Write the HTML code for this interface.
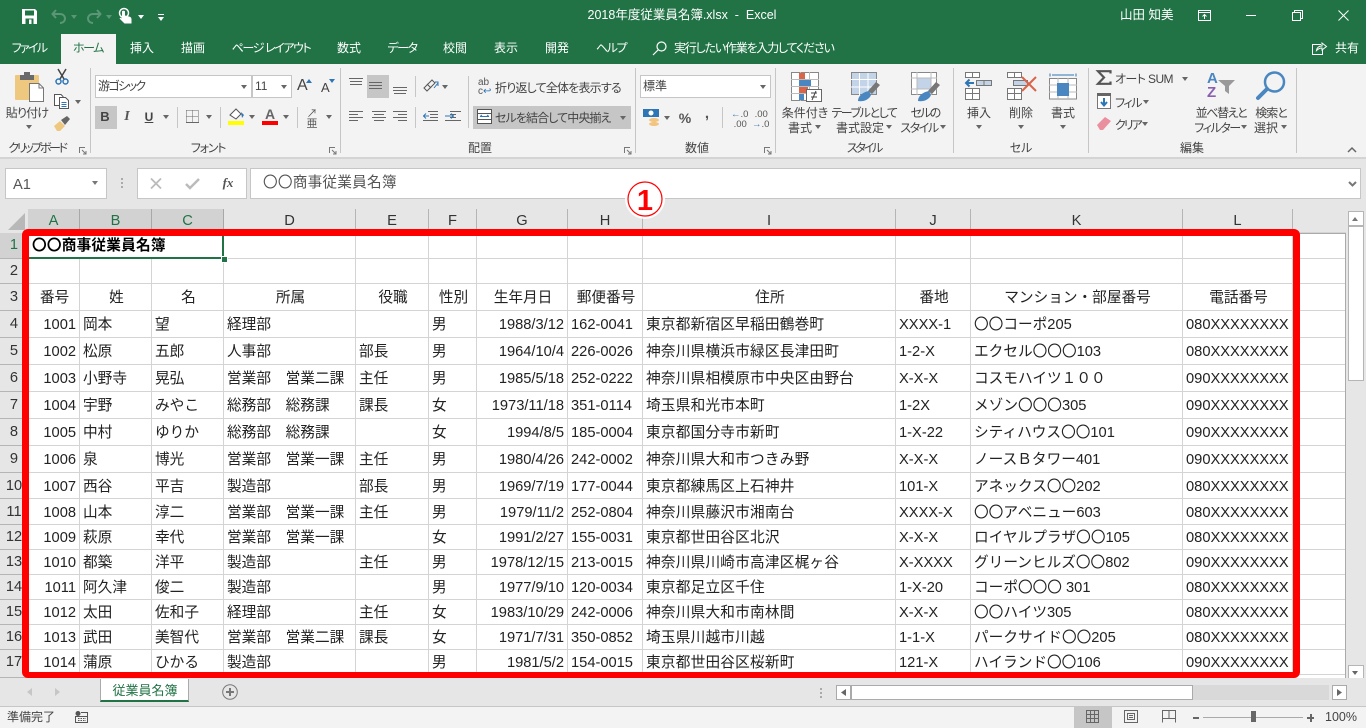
<!DOCTYPE html>
<html lang="ja"><head><meta charset="utf-8"><title>2018年度従業員名簿.xlsx - Excel</title>
<style>
html,body{margin:0;padding:0;width:1366px;height:728px;overflow:hidden;background:#e6e6e6}
body{position:relative;font-family:"Liberation Sans","Noto Sans CJK JP",sans-serif;color:#444}
.t{position:absolute;white-space:nowrap;font-size:12px;line-height:16px;color:#444;font-feature-settings:"palt"}
.c{transform:translateX(-50%);text-align:center}
.w{color:#fff}
.a{position:absolute;width:0;height:0;border:3.5px solid transparent;border-top:4px solid #666;border-bottom:0}
.b{position:absolute}
svg{position:absolute;overflow:visible}
.sep{position:absolute;top:68px;height:85px;width:1px;background:#c6c6c6}
.ss{position:absolute;width:1px;background:#c6c6c6}
.g{position:absolute;white-space:nowrap;font-size:12px;line-height:16px;top:140px;color:#444;transform:translateX(-50%);font-feature-settings:"palt"}
.k{letter-spacing:-1.400px}
.inp{position:absolute;background:#fff;border:1px solid #c6c6c6;box-sizing:border-box}
table{position:absolute;left:27px;top:232px;border-collapse:collapse;table-layout:fixed;width:1318px;font-size:14.67px;color:#111}
td{border:1px solid #d4d4d4;padding:2px 3px 0;white-space:nowrap;overflow:hidden;line-height:16px;color:#222;box-sizing:border-box}
td.r{text-align:right}
td.m{text-align:center;padding:2px 2px 0 4px}
tr td:nth-child(9){letter-spacing:.2px}
.h{position:absolute;top:209px;height:24px;background:#e6e6e6;border-right:1px solid #b5b5b5;box-sizing:border-box;text-align:center;font-size:14.67px;line-height:24px;color:#333}
.h.s{background:#d2d2d2;color:#217346;border-right-color:#a8a8a8}
.rh{position:absolute;left:0;width:28px;background:#e6e6e6;border-bottom:1px solid #b5b5b5;box-sizing:border-box;text-align:center;font-size:14.67px;color:#333;padding-left:0}
</style></head><body>
<!-- title bar -->
<div class="b" style="left:0;top:0;width:1366px;height:64px;background:#217346"></div>
<svg style="left:22px;top:9px" width="15" height="15" viewBox="0 0 15 15"><path d="M0 0H13L15 2V15H0Z" fill="#fff"/><rect x="3" y="1.500" width="9" height="5" fill="#217346"/><rect x="3.500" y="9.500" width="8" height="5.500" fill="#217346"/><rect x="7" y="10.500" width="2.500" height="4.500" fill="#fff"/></svg>
<svg style="left:51px;top:9px" width="16" height="15" viewBox="0 0 16 15" fill="none" stroke="#5b9675" stroke-width="2"><path d="M5 1 1.500 5 5 9M2 5H9C12 5 14 7 14 9.500S12 14 9 14"/></svg>
<div class="a" style="left:71px;top:15px;border-top-color:#5b9675"></div>
<svg style="left:86px;top:9px" width="16" height="15" viewBox="0 0 16 15" fill="none" stroke="#5b9675" stroke-width="2"><path d="M11 1 14.500 5 11 9M14 5H7C4 5 2 7 2 9.500S4 14 7 14"/></svg>
<div class="a" style="left:106px;top:15px;border-top-color:#5b9675"></div>
<svg style="left:118px;top:8px" width="17" height="17" viewBox="0 0 17 17"><circle cx="6" cy="5" r="4.500" fill="none" stroke="#fff" stroke-width="1.500"/><path d="M4 3.500C4 2.500 7 2.500 7 3.500V7.500L11 8.500C13 9 13.500 10 13.500 11.500V15.500H6.500L1.500 10.500 3 9.500 4 10.500Z" fill="#fff"/></svg>
<div class="a" style="left:138px;top:15px;border-top-color:#fff"></div>
<div class="b" style="left:158px;top:14px;width:6px;height:1px;background:#fff"></div>
<div class="a" style="left:158px;top:17px;border-top-color:#fff"></div>
<div class="t w c" style="left:682px;top:7px;font-size:12.500px;font-feature-settings:normal">2018年度従業員名簿.xlsx&nbsp; - &nbsp;Excel</div>
<div class="t w" style="left:1120px;top:7px;font-size:12.500px;font-feature-settings:normal">山田 知美</div>
<svg style="left:1198px;top:10px" width="14" height="11" viewBox="0 0 14 11" fill="none" stroke="#fff"><path d="M.5.500H12.500V10.500H.500ZM.5 2.500H12.500M6.500 9V4.500M4.500 6.500 6.500 4.500 8.500 6.500"/></svg>
<div class="b" style="left:1246px;top:15px;width:10px;height:1px;background:#fff"></div>
<svg style="left:1292px;top:10px" width="11" height="11" viewBox="0 0 11 11" fill="none" stroke="#fff"><path d="M.5 2.500H8.500V10.500H.500ZM2.500 2.500V.500H10.500V8.500H8.500"/></svg>
<svg style="left:1338px;top:10px" width="11" height="11" viewBox="0 0 11 11" fill="none" stroke="#fff"><path d="M.5.500 10.500 10.500M10.500.500.500 10.500"/></svg>
<!-- tabs -->
<div class="b" style="left:61px;top:34px;width:55px;height:31px;background:#f3f3f3"></div>
<div class="t w c k" style="left:29px;top:40px;letter-spacing:-1.700px">ファイル</div>
<div class="t c k" style="left:88px;top:40px;color:#217346">ホーム</div>
<div class="t w c" style="left:142px;top:40px">挿入</div>
<div class="t w c" style="left:193px;top:40px">描画</div>
<div class="t w c k" style="left:271px;top:40px">ページ レイアウト</div>
<div class="t w c" style="left:349px;top:40px">数式</div>
<div class="t w c k" style="left:402px;top:40px">データ</div>
<div class="t w c" style="left:455px;top:40px">校閲</div>
<div class="t w c" style="left:506px;top:40px">表示</div>
<div class="t w c" style="left:557px;top:40px">開発</div>
<div class="t w c k" style="left:611px;top:40px">ヘルプ</div>
<svg style="left:652px;top:41px" width="15" height="15" viewBox="0 0 15 15" fill="none" stroke="#fff" stroke-width="1.200"><circle cx="9.500" cy="5.500" r="4.500"/><path d="M6 9 1 14"/></svg>
<div class="t w" style="left:674px;top:40px;letter-spacing:-1.200px">実行したい作業を入力してください</div>
<svg style="left:1312px;top:41px" width="15" height="14" viewBox="0 0 15 14" fill="none" stroke="#fff"><path d="M9 3.500H.5V13.500H10.500V9M4.500 9.500C5 6.500 7 5 10 5V2L14.500 5.500 10 9V7C8 7 6 8 4.500 9.500Z"/></svg>
<div class="t w" style="left:1335px;top:40px">共有</div>
<!-- ribbon -->
<div class="b" style="left:0;top:64px;width:1366px;height:93px;background:#f3f3f3"></div>
<div class="b" style="left:0;top:157px;width:1366px;height:2px;background:#d4d4d4"></div>
<div class="sep" style="left:90px"></div><div class="sep" style="left:340px"></div><div class="sep" style="left:635px"></div><div class="sep" style="left:775px"></div><div class="sep" style="left:953px"></div><div class="sep" style="left:1088px"></div><div class="sep" style="left:1296px"></div>
<!-- clipboard -->
<svg style="left:15px;top:72px" width="30" height="30" viewBox="0 0 30 30"><rect x="0" y="3" width="24" height="25" rx="1" fill="#edc87e"/><rect x="5" y="3" width="14" height="5" fill="#6a6a6a"/><rect x="9" y="0" width="6" height="4" fill="#6a6a6a"/><path d="M14.500 11.500H24L28.500 16V29.500H14.500Z" fill="#fff" stroke="#777"/><path d="M24 11.500V16H28.500" fill="none" stroke="#777"/></svg>
<svg style="left:55px;top:69px" width="14" height="16" viewBox="0 0 14 16" fill="none" stroke="#444" stroke-width="1.500"><path d="M3 0 9 10M11 0 5 10" /><circle cx="3.500" cy="12.500" r="2.500" stroke="#2e75b6"/><circle cx="10.500" cy="12.500" r="2.500" stroke="#2e75b6"/></svg>
<svg style="left:54px;top:94px" width="15" height="15" viewBox="0 0 15 15" fill="#fff" stroke="#555"><path d="M.5.500H7L9 2.500V11.500H.5Z"/><path d="M5.500 3.500H11.500L14.500 6.500V14.500H5.500Z"/><path d="M7.500 8.500H12.500M7.500 10.500H12.500M7.500 12.500H12.500" stroke="#2e75b6"/></svg>
<div class="a" style="left:75px;top:100px"></div>
<svg style="left:54px;top:116px" width="16" height="15" viewBox="0 0 16 15"><path d="M0 10 6 5 11 10 6 15H3Z" fill="#edc87e"/><path d="M7 4 13 0 16 3 11 9Z" fill="#666"/></svg>
<div class="t c" style="left:27px;top:105px;letter-spacing:-.8px">貼り付け</div>
<div class="a" style="left:26px;top:125px"></div>
<div class="g" style="left:37px;letter-spacing:-2.400px">クリップボード</div>
<svg style="left:79px;top:147px" width="8" height="8" viewBox="0 0 8 8" fill="none" stroke="#777"><path d="M.5 6V.5H6M3 3 7 7M7 4V7H4"/></svg>
<!-- font -->
<div class="inp" style="left:95px;top:75px;width:157px;height:23px"></div>
<div class="t" style="left:98px;top:78px;letter-spacing:-1.600px">游ゴシック</div><div class="a" style="left:241px;top:85px"></div>
<div class="inp" style="left:252px;top:75px;width:40px;height:23px"></div>
<div class="t" style="left:255px;top:78px">11</div><div class="a" style="left:281px;top:85px"></div>
<div class="t" style="left:297px;top:78px;font-size:16px">A</div><div class="a" style="left:306px;top:79px;border-top:0;border-bottom:4px solid #2e75b6"></div>
<div class="t" style="left:321px;top:80px;font-size:13px">A</div><div class="a" style="left:329px;top:79px;border-top-color:#2e75b6"></div>
<div class="b" style="left:95px;top:106px;width:22px;height:23px;background:#c6c6c6"></div>
<div class="t c" style="left:105px;top:109px;font-weight:bold;font-size:13px">B</div>
<div class="t c" style="left:127px;top:109px;font-family:'Liberation Serif',serif;font-style:italic;font-size:14px;font-weight:bold;color:#555">I</div>
<div class="t c" style="left:149px;top:109px;font-weight:bold;font-size:12px;text-decoration:underline">U</div>
<div class="a" style="left:163px;top:115px"></div>
<div class="ss" style="left:177px;top:107px;height:21px"></div>
<svg style="left:186px;top:110px" width="13" height="13" viewBox="0 0 13 13" fill="none" stroke="#666" stroke-dasharray="1 1"><path d="M.5.500H12.500M.5 6.500H12.500M.5.500V12.500M6.500.500V12.500M12.500.500V12.500"/><path d="M0 12.500H13" stroke-dasharray="none"/></svg>
<div class="a" style="left:206px;top:115px"></div>
<div class="ss" style="left:220px;top:107px;height:21px"></div>
<svg style="left:229px;top:108px" width="16" height="13" viewBox="0 0 16 13"><path d="M1 7 7 1 12 6 7 11Z" fill="#fff" stroke="#555"/><path d="M12 4 15 7 13 10Z" fill="#2e75b6"/></svg>
<div class="b" style="left:228px;top:121px;width:16px;height:4px;background:#ffff00"></div>
<div class="a" style="left:249px;top:115px"></div>
<div class="t c" style="left:270px;top:106px;font-size:14px;font-weight:bold;color:#666">A</div>
<div class="b" style="left:262px;top:121px;width:16px;height:4px;background:#f00"></div>
<div class="a" style="left:283px;top:115px"></div>
<div class="ss" style="left:297px;top:107px;height:21px"></div>
<div class="t c" style="left:312px;top:108px;font-size:11px;line-height:13px;color:#555;width:12px">↗<br><span style="position:relative;top:-3px">亜</span></div>
<div class="a" style="left:326px;top:115px"></div>
<div class="g" style="left:208px;letter-spacing:-1.200px">フォント</div>
<svg style="left:329px;top:147px" width="8" height="8" viewBox="0 0 8 8" fill="none" stroke="#777"><path d="M.5 6V.5H6M3 3 7 7M7 4V7H4"/></svg>
<!-- alignment -->
<div class="b" style="left:367px;top:75px;width:22px;height:23px;background:#c6c6c6"></div>
<svg style="left:349px;top:77px" width="60" height="18" viewBox="0 0 60 18" fill="none" stroke="#666"><path d="M0 1.500H14M1 4.500H13M1 7.500H13M20 5.500H33M20 8.500H33M20 11.500H33M44 10.500H58M44 13.500H58M45 16.500H57"/></svg>
<div class="ss" style="left:415px;top:76px;height:21px"></div>
<svg style="left:423px;top:78px" width="16" height="16" viewBox="0 0 16 16" fill="none" stroke="#555"><path d="M1 10 9 2 12 5 4 13ZM4 6 8 10"/><path d="M11 10 15 5M12 4 15 4 15 8" stroke="#2e75b6"/></svg>
<div class="a" style="left:442px;top:85px"></div>
<svg style="left:349px;top:111px" width="60" height="12" viewBox="0 0 60 12" fill="none" stroke="#666"><path d="M0 .5H14M0 3.500H9M0 6.500H14M0 9.500H9M23 .5H37M25 3.500H35M23 6.500H37M25 9.500H35M44 .5H58M49 3.500H58M44 6.500H58M49 9.500H58"/></svg>
<div class="ss" style="left:415px;top:107px;height:21px"></div>
<svg style="left:423px;top:111px" width="40" height="12" viewBox="0 0 40 12" fill="none" stroke="#666"><path d="M5 .5H15M7 3.500H15M7 6.500H15M0 9.500H15M27 .5H38M27 3.500H33M27 6.500H33M22 9.500H38"/><path d="M0 5H6M3 2.500 .5 5 3 7.500M22 5H30M28 2.500 30.500 5 28 7.500" stroke="#2e75b6"/></svg>
<div class="ss" style="left:468px;top:76px;height:52px"></div>
<div class="t" style="left:478px;top:78px;font-size:10px;line-height:9px;color:#555">ab<br>c<span style="color:#2e75b6">↩</span></div>
<div class="t" style="left:495px;top:80px;letter-spacing:-.8px">折り返して全体を表示する</div>
<div class="b" style="left:473px;top:106px;width:158px;height:23px;background:#c6c6c6"></div>
<svg style="left:477px;top:109px" width="15" height="15" viewBox="0 0 15 15" fill="#fff" stroke="#555"><path d="M.5.500H14.500V14.500H.5ZM.5 4.500H14.500M.5 10.500H14.500"/><path d="M3 7.500H12M3 7.500 5 6M12 7.500 10 6" stroke="#2e75b6" fill="none"/></svg>
<div class="t" style="left:495px;top:110px;letter-spacing:-.9px">セルを結合して中央揃え</div>
<div class="a" style="left:620px;top:116px"></div>
<div class="g" style="left:480px">配置</div>
<svg style="left:624px;top:147px" width="8" height="8" viewBox="0 0 8 8" fill="none" stroke="#777"><path d="M.5 6V.5H6M3 3 7 7M7 4V7H4"/></svg>
<!-- number -->
<div class="inp" style="left:640px;top:75px;width:131px;height:23px"></div>
<div class="t" style="left:643px;top:78px">標準</div><div class="a" style="left:760px;top:85px"></div>
<svg style="left:643px;top:109px" width="17" height="17" viewBox="0 0 17 17"><rect x="0" y="0" width="16" height="8" fill="#2e75b6"/><circle cx="8" cy="4" r="2.500" fill="#fff"/><ellipse cx="11" cy="11" rx="5" ry="2" fill="#f2c47f"/><ellipse cx="11" cy="15" rx="5" ry="2" fill="#f2c47f"/></svg>
<div class="a" style="left:664px;top:116px"></div>
<div class="t c" style="left:685px;top:110px;font-size:14px;font-weight:bold;color:#555">%</div>
<div class="t c" style="left:707px;top:106px;font-size:15px;font-weight:bold;color:#555">,</div>
<div class="ss" style="left:722px;top:107px;height:21px"></div>
<div class="t" style="left:731px;top:110px;font-size:9.500px;line-height:10px;color:#555"><span style="color:#2e75b6">←</span>.0<br>&nbsp;.00</div>
<div class="t" style="left:752px;top:110px;font-size:9.500px;line-height:10px;color:#555">&nbsp;.00<br><span style="color:#2e75b6">→</span>.0</div>
<div class="g" style="left:697px">数値</div>
<svg style="left:764px;top:147px" width="8" height="8" viewBox="0 0 8 8" fill="none" stroke="#777"><path d="M.5 6V.5H6M3 3 7 7M7 4V7H4"/></svg>
<!-- styles -->
<svg style="left:791px;top:72px" width="31" height="31" viewBox="0 0 31 31"><path d="M.5.500H27.500V28.500H.5Z" fill="#fff" stroke="#888"/><path d="M9.500 0V29M18.500 0V29M0 7.500H28M0 14.500H28M0 21.500H28" stroke="#bbb"/><rect x="8" y="1" width="6" height="6" fill="#d9644a"/><rect x="8" y="8" width="12" height="6" fill="#4a86c0"/><rect x="8" y="15" width="9" height="6" fill="#d9644a"/><rect x="8" y="22" width="5" height="6" fill="#4a86c0"/><rect x="15.500" y="17.500" width="15" height="12" fill="#fff" stroke="#666"/><path d="M20 21H26M20 25H26M25 19 21 28" stroke="#444" fill="none"/></svg>
<svg style="left:851px;top:72px" width="30" height="30" viewBox="0 0 30 30"><path d="M.5.500H25.500V22.500H.5Z" fill="#c3d4e8" stroke="#888"/><path d="M8.500 0V23M17 0V23M0 7.500H26M0 15H26" stroke="#fff"/><path d="M0 .5H26" stroke="#888"/><path d="M17 19 25 10 29 13 21 22Z" fill="#777"/><path d="M7 29C7 24 12 20 18 19L20 23C18 28 12 30 7 29Z" fill="#4a86c0"/></svg>
<svg style="left:911px;top:72px" width="30" height="30" viewBox="0 0 30 30"><path d="M.5.500H25.500V22.500H.5Z" fill="#fff" stroke="#888"/><rect x="6" y="6" width="14" height="11" fill="#c3d4e8"/><path d="M6 0V23M20 0V23M0 6H26M0 17H26" stroke="#bbb"/><path d="M17 19 25 10 29 13 21 22Z" fill="#777"/><path d="M7 29C7 24 12 20 18 19L20 23C18 28 12 30 7 29Z" fill="#4a86c0"/></svg>
<div class="t c" style="left:805px;top:105px">条件付き</div><div class="t c" style="left:800px;top:120px">書式</div><div class="a" style="left:815px;top:125px"></div>
<div class="t c k" style="left:864px;top:105px">テーブルとして</div><div class="t c" style="left:860px;top:120px">書式設定</div><div class="a" style="left:886px;top:125px"></div>
<div class="t c" style="left:925px;top:105px;letter-spacing:-1.700px">セルの</div><div class="t c k" style="left:919px;top:120px">スタイル</div><div class="a" style="left:940px;top:125px"></div>
<div class="g" style="left:864px;letter-spacing:-2.200px">スタイル</div>
<!-- cells -->
<svg style="left:965px;top:72px" width="28" height="28" viewBox="0 0 28 28" fill="#fff" stroke="#777"><path d="M.5.500H14.500V5.500H.5ZM7.500.500V5.500M.5 16.500H14.500V27.500H.5ZM7.500 16.500V27.500M.5 21.500H14.500"/><path d="M11.500 8.500H26.500V13.500H11.500Z" fill="#c3d4e8"/><path d="M19 8.500V13.500"/><path d="M1 11H9M4.500 7.500 1 11 4.500 14.500" fill="none" stroke="#2e75b6" stroke-width="2"/></svg>
<svg style="left:1007px;top:72px" width="30" height="28" viewBox="0 0 30 28" fill="#fff" stroke="#777"><path d="M.5.500H14.500V5.500H.5ZM7.500.500V5.500M.5 16.500H14.500V27.500H.5ZM7.500 16.500V27.500M.5 21.500H14.500"/><path d="M6.500 8.500H20.500V13.500H6.500Z" fill="#c3d4e8"/><path d="M15 5 29 19M29 5 15 19" stroke="#d9644a" stroke-width="2"/></svg>
<svg style="left:1049px;top:72px" width="28" height="30" viewBox="0 0 28 30" fill="none"><path d="M1 1.500V4.500M27 1.500V4.500M3 3H25" stroke="#2e75b6"/><path d="M.5 6.500H27.500V27H.5Z" fill="#fff" stroke="#888"/><path d="M9 6V27M19 6V27M0 13H28M0 20H28" stroke="#bbb"/><rect x="8" y="11" width="12" height="13" fill="#4a86c0" /></svg>
<div class="t c" style="left:979px;top:105px">挿入</div><div class="a" style="left:976px;top:125px"></div>
<div class="t c" style="left:1021px;top:105px">削除</div><div class="a" style="left:1018px;top:125px"></div>
<div class="t c" style="left:1063px;top:105px">書式</div><div class="a" style="left:1060px;top:125px"></div>
<div class="g" style="left:1021px">セル</div>
<!-- editing -->
<svg style="left:1096px;top:70px" width="15" height="15" viewBox="0 0 15 15" fill="none" stroke="#555" stroke-width="2.200"><path d="M14.500 3.500V1.200H2L8 7.500 2 13.800H14.500V11.500"/></svg>
<div class="t" style="left:1115px;top:71px;letter-spacing:-.6px">オート SUM</div><div class="a" style="left:1182px;top:77px"></div>
<svg style="left:1097px;top:93px" width="14" height="16" viewBox="0 0 14 16"><path d="M.5.500H13.500V15.500H.5Z" fill="#fff" stroke="#777"/><rect width="14" height="3" fill="#666"/><path d="M7 5V12M4 9 7 12.500 10 9" fill="none" stroke="#2e75b6" stroke-width="2"/></svg>
<div class="t k" style="left:1115px;top:95px">フィル</div><div class="a" style="left:1143px;top:100px"></div>
<svg style="left:1097px;top:117px" width="14" height="13" viewBox="0 0 14 13"><path d="M0 8 8 0 14 4 6 13H3Z" fill="#ea8f9d"/></svg>
<div class="t" style="left:1115px;top:117px;letter-spacing:-2px">クリア</div><div class="a" style="left:1142px;top:122px"></div>
<div class="t" style="left:1207px;top:71px;font-size:15px;line-height:16px;font-weight:bold;color:#4a86c0">A</div>
<div class="t" style="left:1207px;top:85px;font-size:15px;line-height:16px;font-weight:bold;color:#8a5fb0">Z</div>
<svg style="left:1218px;top:80px" width="18" height="15" viewBox="0 0 18 15"><path d="M0 0H17L11 6V14L7 11V6Z" fill="#999"/></svg>
<svg style="left:1256px;top:71px" width="30" height="29" viewBox="0 0 30 29" fill="none" stroke="#4a86c0"><circle cx="18.500" cy="11" r="9.500" stroke-width="2.500"/><path d="M11 18 2 27" stroke-width="4" stroke-linecap="round"/></svg>
<div class="t c k" style="left:1221px;top:105px">並べ替えと</div><div class="t c k" style="left:1217px;top:120px">フィルター</div><div class="a" style="left:1241px;top:125px"></div>
<div class="t c" style="left:1271px;top:105px;letter-spacing:-1px">検索と</div><div class="t c" style="left:1266px;top:120px">選択</div><div class="a" style="left:1281px;top:125px"></div>
<div class="g" style="left:1192px">編集</div>
<svg style="left:1347px;top:147px" width="10" height="6" viewBox="0 0 10 6" fill="none" stroke="#666" stroke-width="1.500"><path d="M1 5 5 1 9 5"/></svg>
<!-- formula bar -->
<div class="inp" style="left:5px;top:168px;width:102px;height:31px"></div>
<div class="t" style="left:13px;top:177px;font-size:14.670px;color:#555">A1</div>
<div class="a" style="left:92px;top:181px;border-top-color:#777;border-width:4px 3.500px 0;border-top-width:4px"></div>
<div class="b" style="left:121px;top:178px;width:2px;height:2px;background:#aaa;box-shadow:0 4px #aaa,0 8px #aaa"></div>
<div class="inp" style="left:137px;top:168px;width:110px;height:31px"></div>
<svg style="left:150px;top:178px" width="12" height="11" viewBox="0 0 12 11" fill="none" stroke="#bbb" stroke-width="1.800"><path d="M1 .5 11 10.500M11 .5 1 10.500"/></svg>
<svg style="left:185px;top:178px" width="15" height="11" viewBox="0 0 15 11" fill="none" stroke="#bbb" stroke-width="2.500"><path d="M1 6 5 10 14 1"/></svg>
<div class="t c" style="left:228px;top:175px;font-family:'Liberation Serif',serif;font-style:italic;font-weight:bold;font-size:13px;color:#555">fx</div>
<div class="inp" style="left:250px;top:168px;width:1111px;height:31px"></div>
<div class="t" style="left:263px;top:175px;font-size:14.670px;color:#555;letter-spacing:.2px;font-feature-settings:normal">〇〇商事従業員名簿</div>
<svg style="left:1348px;top:181px" width="9" height="6" viewBox="0 0 9 6" fill="none" stroke="#777" stroke-width="2"><path d="M1 1 4.500 4.500 8 1"/></svg>
<!-- grid -->
<svg style="left:8px;top:213px" width="18" height="18"><path d="M17 0V17H0Z" fill="#b8b8b8"/></svg>
<div class="h s" style="left:28px;width:52px">A</div>
<div class="h s" style="left:80px;width:72px">B</div>
<div class="h s" style="left:152px;width:72px">C</div>
<div class="h" style="left:224px;width:132px">D</div>
<div class="h" style="left:356px;width:73px">E</div>
<div class="h" style="left:429px;width:48px">F</div>
<div class="h" style="left:477px;width:91px">G</div>
<div class="h" style="left:568px;width:75px">H</div>
<div class="h" style="left:643px;width:253px">I</div>
<div class="h" style="left:896px;width:75px">J</div>
<div class="h" style="left:971px;width:212px">K</div>
<div class="h" style="left:1183px;width:110px">L</div>
<div class="rh" style="top:233px;height:26px;line-height:25px;background:#d2d2d2;color:#217346">1</div>
<div class="rh" style="top:259px;height:25px;line-height:24px">2</div>
<div class="rh" style="top:284px;height:27px;line-height:27px">3</div>
<div class="rh" style="top:311px;height:27px;line-height:27px">4</div>
<div class="rh" style="top:338px;height:27px;line-height:27px">5</div>
<div class="rh" style="top:365px;height:27px;line-height:27px">6</div>
<div class="rh" style="top:392px;height:27px;line-height:27px">7</div>
<div class="rh" style="top:419px;height:27px;line-height:27px">8</div>
<div class="rh" style="top:446px;height:27px;line-height:27px">9</div>
<div class="rh" style="top:473px;height:26px;line-height:26px">10</div>
<div class="rh" style="top:499px;height:26px;line-height:26px">11</div>
<div class="rh" style="top:525px;height:25px;line-height:25px">12</div>
<div class="rh" style="top:550px;height:25px;line-height:25px">13</div>
<div class="rh" style="top:575px;height:25px;line-height:25px">14</div>
<div class="rh" style="top:600px;height:25px;line-height:25px">15</div>
<div class="rh" style="top:625px;height:25px;line-height:25px">16</div>
<div class="rh" style="top:650px;height:28px;line-height:25px">17</div>
<div class="b" style="left:28px;top:233px;width:1317px;height:445px;background:#fff"></div>
<table>
<colgroup><col style="width:52px"><col style="width:72px"><col style="width:72px"><col style="width:132px"><col style="width:73px"><col style="width:48px"><col style="width:91px"><col style="width:75px"><col style="width:253px"><col style="width:75px"><col style="width:212px"><col style="width:110px"><col style="width:53px"></colgroup>
<tr style="height:26px"><td colspan="3" style="border-right:0;font-weight:bold;color:#000;padding-top:0;padding-left:4px;letter-spacing:.2px">〇〇商事従業員名簿</td><td></td><td></td><td></td><td></td><td></td><td></td><td></td><td></td><td></td><td></td></tr>
<tr style="height:25px"><td></td><td></td><td></td><td></td><td></td><td></td><td></td><td></td><td></td><td></td><td></td><td></td><td></td></tr>
<tr style="height:27px"><td class="m">番号</td><td class="m">姓</td><td class="m">名</td><td class="m">所属</td><td class="m">役職</td><td class="m">性別</td><td class="m">生年月日</td><td class="m">郵便番号</td><td class="m">住所</td><td class="m">番地</td><td class="m">マンション・部屋番号</td><td class="m">電話番号</td><td></td></tr>
<tr style="height:27px"><td class="r">1001</td><td>岡本</td><td>望</td><td>経理部</td><td></td><td>男</td><td class="r">1988/3/12</td><td>162-0041</td><td>東京都新宿区早稲田鶴巻町</td><td>XXXX-1</td><td>〇〇コーポ205</td><td>080XXXXXXXX</td><td></td></tr>
<tr style="height:27px"><td class="r">1002</td><td>松原</td><td>五郎</td><td>人事部</td><td>部長</td><td>男</td><td class="r">1964/10/4</td><td>226-0026</td><td>神奈川県横浜市緑区長津田町</td><td>1-2-X</td><td>エクセル〇〇〇103</td><td>080XXXXXXXX</td><td></td></tr>
<tr style="height:27px"><td class="r">1003</td><td>小野寺</td><td>晃弘</td><td>営業部　営業二課</td><td>主任</td><td>男</td><td class="r">1985/5/18</td><td>252-0222</td><td>神奈川県相模原市中央区由野台</td><td>X-X-X</td><td>コスモハイツ１００</td><td>090XXXXXXXX</td><td></td></tr>
<tr style="height:27px"><td class="r">1004</td><td>宇野</td><td>みやこ</td><td>総務部　総務課</td><td>課長</td><td>女</td><td class="r">1973/11/18</td><td>351-0114</td><td>埼玉県和光市本町</td><td>1-2X</td><td>メゾン〇〇〇305</td><td>090XXXXXXXX</td><td></td></tr>
<tr style="height:27px"><td class="r">1005</td><td>中村</td><td>ゆりか</td><td>総務部　総務課</td><td></td><td>女</td><td class="r">1994/8/5</td><td>185-0004</td><td>東京都国分寺市新町</td><td>1-X-22</td><td>シティハウス〇〇101</td><td>090XXXXXXXX</td><td></td></tr>
<tr style="height:27px"><td class="r">1006</td><td>泉</td><td>博光</td><td>営業部　営業一課</td><td>主任</td><td>男</td><td class="r">1980/4/26</td><td>242-0002</td><td>神奈川県大和市つきみ野</td><td>X-X-X</td><td>ノースＢタワー401</td><td>090XXXXXXXX</td><td></td></tr>
<tr style="height:26px"><td class="r">1007</td><td>西谷</td><td>平吉</td><td>製造部</td><td>部長</td><td>男</td><td class="r">1969/7/19</td><td>177-0044</td><td>東京都練馬区上石神井</td><td>101-X</td><td>アネックス〇〇202</td><td>080XXXXXXXX</td><td></td></tr>
<tr style="height:26px"><td class="r">1008</td><td>山本</td><td>淳二</td><td>営業部　営業一課</td><td>主任</td><td>男</td><td class="r">1979/11/2</td><td>252-0804</td><td>神奈川県藤沢市湘南台</td><td>XXXX-X</td><td>〇〇アベニュー603</td><td>080XXXXXXXX</td><td></td></tr>
<tr style="height:25px"><td class="r">1009</td><td>萩原</td><td>幸代</td><td>営業部　営業一課</td><td></td><td>女</td><td class="r">1991/2/27</td><td>155-0031</td><td>東京都世田谷区北沢</td><td>X-X-X</td><td>ロイヤルプラザ〇〇105</td><td>080XXXXXXXX</td><td></td></tr>
<tr style="height:25px"><td class="r">1010</td><td>都築</td><td>洋平</td><td>製造部</td><td>主任</td><td>男</td><td class="r">1978/12/15</td><td>213-0015</td><td>神奈川県川崎市高津区梶ヶ谷</td><td>X-XXXX</td><td>グリーンヒルズ〇〇802</td><td>090XXXXXXXX</td><td></td></tr>
<tr style="height:25px"><td class="r">1011</td><td>阿久津</td><td>俊二</td><td>製造部</td><td></td><td>男</td><td class="r">1977/9/10</td><td>120-0034</td><td>東京都足立区千住</td><td>1-X-20</td><td>コーポ〇〇〇 301</td><td>080XXXXXXXX</td><td></td></tr>
<tr style="height:25px"><td class="r">1012</td><td>太田</td><td>佐和子</td><td>経理部</td><td>主任</td><td>女</td><td class="r">1983/10/29</td><td>242-0006</td><td>神奈川県大和市南林間</td><td>X-X-X</td><td>〇〇ハイツ305</td><td>080XXXXXXXX</td><td></td></tr>
<tr style="height:25px"><td class="r">1013</td><td>武田</td><td>美智代</td><td>営業部　営業二課</td><td>課長</td><td>女</td><td class="r">1971/7/31</td><td>350-0852</td><td>埼玉県川越市川越</td><td>1-1-X</td><td>パークサイド〇〇205</td><td>080XXXXXXXX</td><td></td></tr>
<tr style="height:25px"><td class="r">1014</td><td>蒲原</td><td>ひかる</td><td>製造部</td><td></td><td>男</td><td class="r">1981/5/2</td><td>154-0015</td><td>東京都世田谷区桜新町</td><td>121-X</td><td>ハイランド〇〇106</td><td>090XXXXXXXX</td><td></td></tr>
</table>
<!-- selection -->
<div class="b" style="left:28px;top:233px;width:196px;height:26px;border:solid #217346;border-width:0 2px 2px 0;box-sizing:border-box"></div>
<div class="b" style="left:221px;top:256px;width:5px;height:5px;background:#217346;border:1px solid #fff"></div>
<!-- right side scroll -->
<div class="b" style="left:1293px;top:233px;width:52px;height:1px;background:#aaa"></div>
<div class="b" style="left:1345px;top:233px;width:1px;height:446px;background:#aaa"></div>
<div class="b" style="left:1346px;top:209px;width:20px;height:470px;background:#e6e6e6"></div>
<div class="b" style="left:1348px;top:211px;width:16px;height:15px;background:#fff;border:1px solid #b5b5b5;box-sizing:border-box"></div>
<div class="a" style="left:1352px;top:217px;border-top:0;border-bottom:4px solid #777"></div>
<div class="b" style="left:1348px;top:226px;width:16px;height:155px;background:#fff;border:1px solid #b5b5b5;box-sizing:border-box"></div>
<div class="b" style="left:1348px;top:665px;width:16px;height:14px;background:#fff;border:1px solid #b5b5b5;box-sizing:border-box"></div>
<div class="a" style="left:1352px;top:671px"></div>
<!-- red frame -->
<div class="b" style="left:22px;top:229px;width:1278px;height:449px;border:7px solid #f00;border-bottom-width:6px;border-radius:6px;box-sizing:border-box"></div>
<!-- circled number -->
<svg style="left:624px;top:178px" width="42" height="42" viewBox="0 0 42 42"><circle cx="21" cy="21" r="20" fill="#fff" opacity=".9"/><circle cx="21" cy="21" r="17" fill="#fff" stroke="#f00" stroke-width="1.200"/><text x="21" y="32" text-anchor="middle" font-family="Liberation Sans" font-weight="bold" font-size="29" fill="#f00">1</text></svg>
<!-- sheet tabs -->
<div class="b" style="left:0;top:678px;width:1366px;height:28px;background:#e6e6e6"></div>
<svg style="left:26px;top:688px" width="34" height="9" viewBox="0 0 34 9" fill="#c6c6c6"><path d="M6 0V8L1 4ZM29 0V8L34 4Z"/></svg>
<div class="b" style="left:100px;top:679px;width:89px;height:23px;background:#fff;border:1px solid #aaa;border-top:0;border-bottom:2px solid #217346;box-sizing:border-box"></div>
<div class="t c" style="left:145px;top:683px;font-size:13px;color:#217346;font-feature-settings:normal">従業員名簿</div>
<svg style="left:222px;top:684px" width="16" height="16" viewBox="0 0 16 16" fill="none" stroke="#777"><circle cx="8" cy="8" r="7.300"/><path d="M4 8H12M8 4V12" stroke-width="2"/></svg>
<div class="b" style="left:820px;top:688px;width:2px;height:2px;background:#aaa;box-shadow:0 4px #aaa,0 8px #aaa"></div>
<div class="b" style="left:836px;top:685px;width:15px;height:15px;background:#fff;border:1px solid #aaa;box-sizing:border-box"></div>
<svg style="left:841px;top:689px" width="5" height="7"><path d="M5 0V7L0 3.500Z" fill="#666"/></svg>
<div class="b" style="left:851px;top:685px;width:478px;height:15px;background:#d9d9d9"></div>
<div class="b" style="left:851px;top:685px;width:342px;height:15px;background:#fff;border:1px solid #aaa;box-sizing:border-box"></div>
<div class="b" style="left:1332px;top:685px;width:15px;height:15px;background:#fff;border:1px solid #aaa;box-sizing:border-box"></div>
<svg style="left:1337px;top:689px" width="5" height="7"><path d="M0 0V7L5 3.500Z" fill="#666"/></svg>
<!-- status -->
<div class="b" style="left:0;top:706px;width:1366px;height:22px;background:#f3f3f3;border-top:1px solid #c6c6c6;box-sizing:border-box"></div>
<div class="t" style="left:7px;top:709px;font-feature-settings:normal">準備完了</div>
<svg style="left:75px;top:711px" width="13" height="12" viewBox="0 0 13 12"><circle cx="3" cy="2.500" r="2.500" fill="#555"/><path d="M.5 5.500H12.500V11.500H.5ZM6 1.500H12.500V5" fill="none" stroke="#555"/><path d="M3 7.500H11M3 9.500H11" stroke="#555" stroke-dasharray="1.500 1"/></svg>
<div class="b" style="left:1074px;top:707px;width:38px;height:21px;background:#c6c6c6"></div>
<svg style="left:1086px;top:710px" width="13" height="13" fill="none" stroke="#666"><path d="M.5.500H12.500V12.500H.5ZM4.500 0V13M8.500 0V13M0 4.500H13M0 8.500H13"/></svg>
<svg style="left:1124px;top:710px" width="14" height="13" fill="none" stroke="#666"><path d="M.5.500H13.500V12.500H.5ZM3.500 3.500H10.500V9.500H3.500ZM5 5.500H9M5 7.500H9"/></svg>
<svg style="left:1162px;top:710px" width="14" height="13" fill="none" stroke="#666"><path d="M.5 12.500V.5H13.500V12.500M.5 8.500H13.500M7 .5V8.500"/></svg>
<div class="b" style="left:1193px;top:717px;width:6px;height:2px;background:#666"></div>
<div class="b" style="left:1203px;top:717px;width:100px;height:1px;background:#aaa"></div>
<div class="b" style="left:1251px;top:711px;width:5px;height:11px;background:#666"></div>
<div class="b" style="left:1307px;top:717px;width:7px;height:2px;background:#666"></div>
<div class="b" style="left:1310px;top:714px;width:2px;height:8px;background:#666"></div>
<div class="t" style="left:1325px;top:709px;font-size:12.500px">100%</div>
</body></html>
